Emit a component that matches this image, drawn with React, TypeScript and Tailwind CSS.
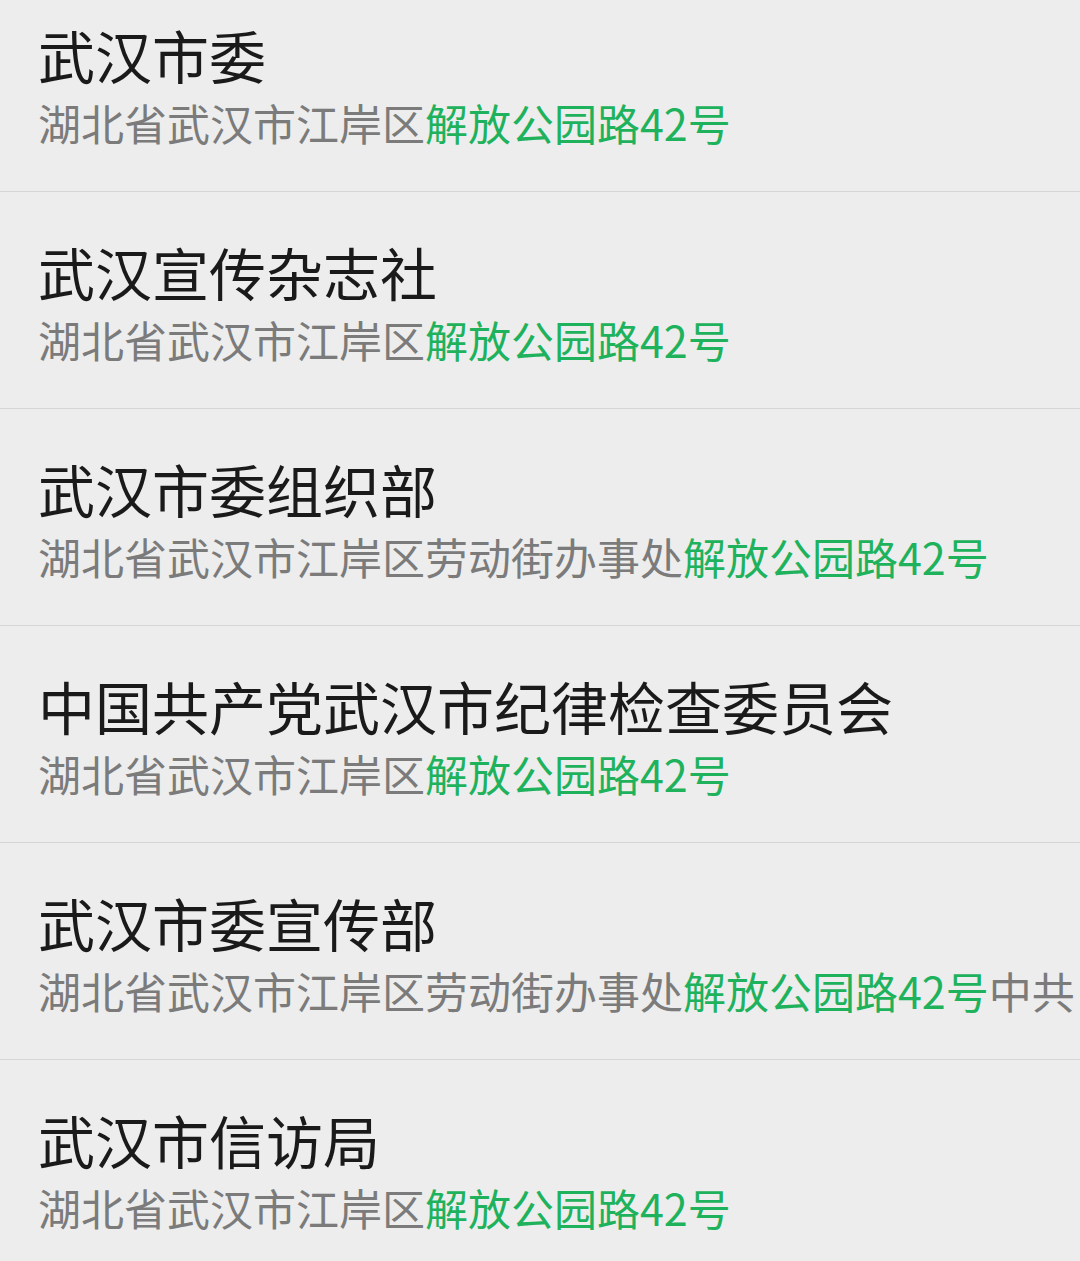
const places = [
  { name: "武汉市委", prefix: "湖北省武汉市江岸区", hit: "解放公园路42号", rest: "" },
  { name: "武汉宣传杂志社", prefix: "湖北省武汉市江岸区", hit: "解放公园路42号", rest: "" },
  { name: "武汉市委组织部", prefix: "湖北省武汉市江岸区劳动街办事处", hit: "解放公园路42号", rest: "" },
  { name: "中国共产党武汉市纪律检查委员会", prefix: "湖北省武汉市江岸区", hit: "解放公园路42号", rest: "" },
  { name: "武汉市委宣传部", prefix: "湖北省武汉市江岸区劳动街办事处", hit: "解放公园路42号", rest: "中共" },
  { name: "武汉市信访局", prefix: "湖北省武汉市江岸区", hit: "解放公园路42号", rest: "" },
];

export default function App() {
  return (
    <div
      className="w-[1080px] h-[1261px] overflow-hidden bg-[#ededed]"
      style={{ fontFamily: '"Noto Sans CJK SC", "Noto Sans", sans-serif' }}
    >
      <ul className="-mt-[25px]">
        {places.map((p) => (
          <li key={p.name} className="pl-[38px] pt-[51px] pb-[47px] border-b border-[#d6d6d6]">
            <div className="text-[57px] leading-[57px] text-[#1a1a1a] whitespace-nowrap">{p.name}</div>
            <div className="mt-[18px] text-[43px] leading-[43px] text-[#7b7b7b] whitespace-nowrap">
              {p.prefix}
              <span className="text-[#1fb25d]">{p.hit}</span>
              {p.rest}
            </div>
          </li>
        ))}
      </ul>
    </div>
  );
}
